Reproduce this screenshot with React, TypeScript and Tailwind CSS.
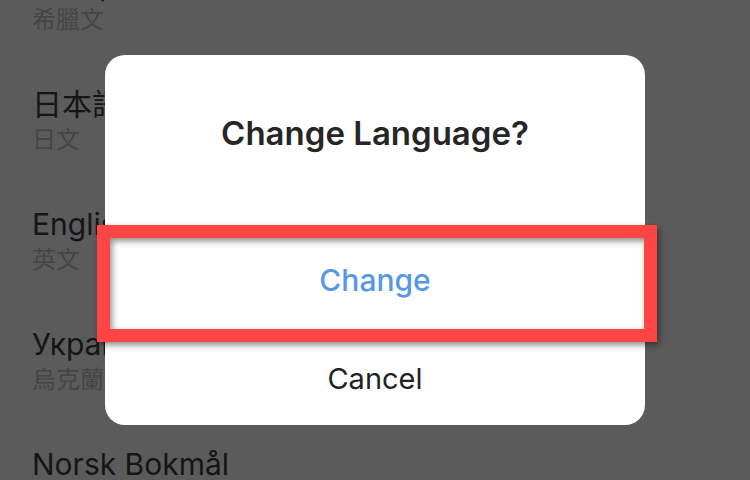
import React from "react";

const rows = [
  { name: "Ελληνικά", sub: "希臘文" },
  { name: "日本語", sub: "日文" },
  { name: "English", sub: "英文" },
  { name: "Українська", sub: "烏克蘭文" },
  { name: "Norsk Bokmål", sub: "挪威文" },
];

export default function App() {
  return (
    <div
      className="relative w-[750px] h-[480px] overflow-hidden bg-[#5b5b5b]"
      style={{ fontFamily: "Inter, 'Noto Sans CJK TC', sans-serif" }}
    >
      <div className="flex flex-col mt-[-54px]">
        {rows.map((r) => (
          <div key={r.name} className="h-[120px] shrink-0 pl-[32px] pt-[20px] flex flex-col">
            <div className="text-[30px] leading-[36px] text-[#151515]">{r.name}</div>
            <div className="mt-[3px] text-[24px] leading-[30px] text-[#454545]">{r.sub}</div>
          </div>
        ))}
      </div>

      <div className="absolute left-[105px] top-[55px] w-[540px] h-[370px] bg-white rounded-[20px] flex flex-col">
        <div className="h-[175px] pb-[17px] flex items-center justify-center text-[33px] font-semibold text-[#262626]">
          Change Language?
        </div>
        <div className="h-[100px] flex items-center justify-center text-[30px] font-medium text-[#5597ea]">
          Change
        </div>
        <div className="h-[95px] pt-[3px] flex items-center justify-center text-[29px] text-[#222222]">
          Cancel
        </div>
      </div>

      <div className="absolute left-[97px] top-[225px] w-[560px] h-[117px] border-[13px] border-[#ff4444] drop-shadow-[2px_3px_3px_rgba(0,0,0,0.45)]" />
    </div>
  );
}
